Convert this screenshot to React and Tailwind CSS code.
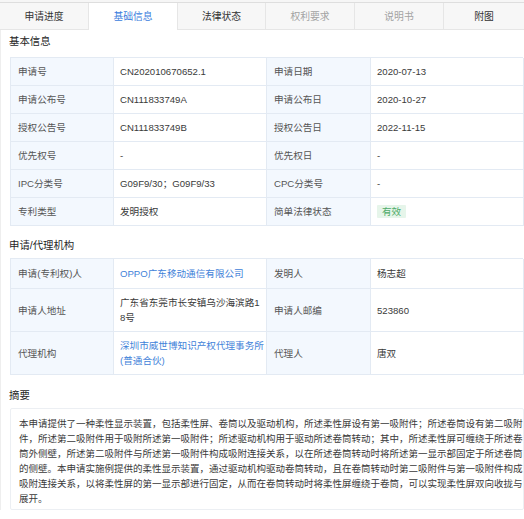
import React from 'react';

const tabs = [
  { name: '申请进度', w: 'w-[89px]', tone: 'text-[#333]' },
  { name: '基础信息', w: 'w-[89px]', tone: 'text-[#3b7ddd]', active: true },
  { name: '法律状态', w: 'w-[88px]', tone: 'text-[#333]' },
  { name: '权利要求', w: 'w-[89px]', tone: 'text-[#a3a3a3]' },
  { name: '说明书', w: 'w-[89px]', tone: 'text-[#a3a3a3]' },
  { name: '附图', w: 'flex-1', tone: 'text-[#333]' },
];

const basicRows = [
  ['申请号', 'CN202010670652.1', '申请日期', '2020-07-13'],
  ['申请公布号', 'CN111833749A', '申请公布日', '2020-10-27'],
  ['授权公告号', 'CN111833749B', '授权公告日', '2022-11-15'],
  ['优先权号', '-', '优先权日', '-'],
  ['IPC分类号', 'G09F9/30；G09F9/33', 'CPC分类号', '-'],
  ['专利类型', '发明授权', '简单法律状态', 'badge'],
];

const abstractLines = [
  '本申请提供了一种柔性显示装置，包括柔性屏、卷筒以及驱动机构，所述柔性屏设有第一吸附件；所述卷筒设有第二吸附',
  '件，所述第二吸附件用于吸附所述第一吸附件；所述驱动机构用于驱动所述卷筒转动；其中，所述柔性屏可缠绕于所述卷',
  '筒外侧壁，所述第二吸附件与所述第一吸附件构成吸附连接关系，以在所述卷筒转动时将所述第一显示部固定于所述卷筒',
  '的侧壁。本申请实施例提供的柔性显示装置，通过驱动机构驱动卷筒转动，且在卷筒转动时第二吸附件与第一吸附件构成',
  '吸附连接关系，以将柔性屏的第一显示部进行固定，从而在卷筒转动时将柔性屏缠绕于卷筒，可以实现柔性屏双向收拢与',
];

const Label = ({ children, h }) => (
  <div className={`${h} flex items-center pl-[7px] bg-[#f3f8fe] text-[#555] border-r border-b border-[#e3eaf3]`}>
    {children}
  </div>
);

const Value = ({ children, h }) => (
  <div className={`${h} flex items-center pl-[6px] pr-[2px] bg-white text-[#3a3a3a] border-r border-b border-[#e3eaf3]`}>
    {children}
  </div>
);

const Heading = ({ children, className }) => (
  <div className={`text-[10.4px] leading-[14px] text-[#1f1f1f] ${className}`}>{children}</div>
);

export default function App() {
  return (
    <div className="w-[524px] h-[519px] overflow-hidden bg-white font-['Liberation_Sans','Noto_Sans_CJK_SC',sans-serif] text-[9.6px] leading-[15px]">
      {/* tabs */}
      <div className="pt-[2px] bg-[#f6f6f6]">
        <div className="flex h-[28px] border-t border-[#dedede]">
          {tabs.map((t) => (
            <div
              key={t.name}
              className={`${t.w} flex items-center justify-center text-[9.8px] ${t.tone} border-r border-[#e6e6e6] last:border-r-0 ${
                t.active ? 'bg-white' : 'bg-[#f7f7f7] border-b'
              }`}
            >
              {t.name}
            </div>
          ))}
        </div>
      </div>

      <div className="pl-[9px] pr-[1px] border-l border-[#eeeeee]">
        <Heading className="pt-[5px] -ml-[1px]">基本信息</Heading>
        <div className="mt-[8px] grid grid-cols-[103px_153px_104px_153px] border-t border-l border-[#e3eaf3]">
          {basicRows.map((r) => (
            <React.Fragment key={r[0]}>
              <Label h="h-[28px]">{r[0]}</Label>
              <Value h="h-[28px]">{r[1]}</Value>
              <Label h="h-[28px]">{r[2]}</Label>
              <Value h="h-[28px]">
                {r[3] === 'badge' ? (
                  <span className="inline-flex items-center h-[13px] px-[5px] bg-[#e6f5ea] text-[#4daa68] rounded-[1px]">
                    有效
                  </span>
                ) : (
                  r[3]
                )}
              </Value>
            </React.Fragment>
          ))}
        </div>

        <Heading className="mt-[13px] -ml-[1px]">申请/代理机构</Heading>
        <div className="mt-[5px] grid grid-cols-[103px_153px_104px_153px] border-t border-l border-[#e3eaf3]">
          <Label h="h-[30px]">申请(专利权)人</Label>
          <Value h="h-[30px]">
            <span className="text-[#3f82d9]">OPPO广东移动通信有限公司</span>
          </Value>
          <Label h="h-[30px]">发明人</Label>
          <Value h="h-[30px]">杨志超</Value>

          <Label h="h-[43px]">申请人地址</Label>
          <Value h="h-[43px]">
            <div className="whitespace-nowrap">
              广东省东莞市长安镇乌沙海滨路1
              <br />
              8号
            </div>
          </Value>
          <Label h="h-[43px]">申请人邮编</Label>
          <Value h="h-[43px]">523860</Value>

          <Label h="h-[43px]">代理机构</Label>
          <Value h="h-[43px]">
            <div className="whitespace-nowrap text-[#3f82d9]">
              深圳市威世博知识产权代理事务所
              <br />
              (普通合伙)
            </div>
          </Value>
          <Label h="h-[43px]">代理人</Label>
          <Value h="h-[43px]">唐双</Value>
        </div>

        <Heading className="mt-[14px] -ml-[1px]">摘要</Heading>
        <div className="mt-[5px] w-[514px] h-[102px] border border-[#eceff3] rounded-[2px] px-[8px] pt-[7px] text-[9.5px] leading-[15px] text-[#3a3a3a]">
          {abstractLines.map((l, i) => (
            <div key={i} className="whitespace-nowrap text-justify [text-align-last:justify]">
              {l}
            </div>
          ))}
          <div>展开。</div>
        </div>
      </div>
    </div>
  );
}
